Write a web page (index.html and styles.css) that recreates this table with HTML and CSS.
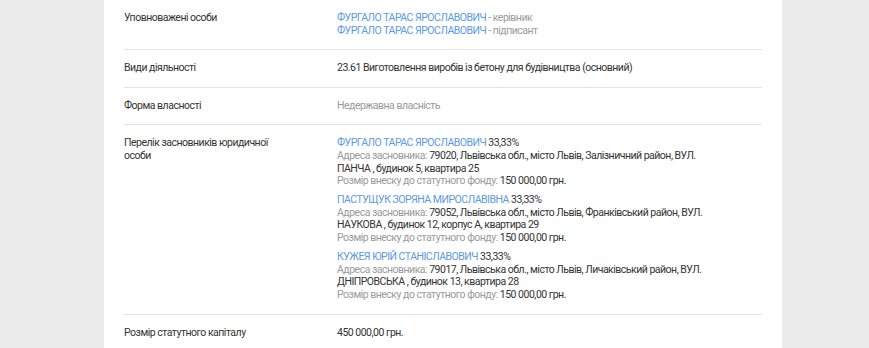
FILE: index.html
```html
<!DOCTYPE html>
<html lang="uk">
<head>
<meta charset="utf-8">
<link rel="stylesheet" href="styles.css">
</head>
<body>
<div class="page">
  <div class="card">
    <div class="row first">
      <div class="label">Уповноважені особи</div>
      <div class="value">
        <div><a class="link">ФУРГАЛО ТАРАС ЯРОСЛАВОВИЧ</a> <span class="muted">- керівник</span></div>
        <div><a class="link">ФУРГАЛО ТАРАС ЯРОСЛАВОВИЧ</a> <span class="muted">- підписант</span></div>
      </div>
    </div>
    <div class="row">
      <div class="label">Види діяльності</div>
      <div class="value">23.61 Виготовлення виробів із бетону для будівництва (основний)</div>
    </div>
    <div class="row">
      <div class="label">Форма власності</div>
      <div class="value muted">Недержавна власність</div>
    </div>
    <div class="row">
      <div class="label">Перелік засновників юридичної<br>особи</div>
      <div class="value founders">
        <div class="founder">
          <div><a class="link">ФУРГАЛО ТАРАС ЯРОСЛАВОВИЧ</a> 33,33%</div>
          <div><span class="muted">Адреса засновника:</span> 79020, Львівська обл., місто Львів, Залізничний район, ВУЛ. ПАНЧА , будинок 5, квартира 25</div>
          <div><span class="muted">Розмір внеску до статутного фонду:</span> 150 000,00 грн.</div>
        </div>
        <div class="founder">
          <div><a class="link">ПАСТУЩУК ЗОРЯНА МИРОСЛАВІВНА</a> 33,33%</div>
          <div><span class="muted">Адреса засновника:</span> 79052, Львівська обл., місто Львів, Франківський район, ВУЛ. НАУКОВА , будинок 12, корпус А, квартира 29</div>
          <div><span class="muted">Розмір внеску до статутного фонду:</span> 150 000,00 грн.</div>
        </div>
        <div class="founder">
          <div><a class="link">КУЖЕЯ ЮРІЙ СТАНІСЛАВОВИЧ</a> 33,33%</div>
          <div><span class="muted">Адреса засновника:</span> 79017, Львівська обл., місто Львів, Личаківський район, ВУЛ. ДНІПРОВСЬКА , будинок 13, квартира 28</div>
          <div><span class="muted">Розмір внеску до статутного фонду:</span> 150 000,00 грн.</div>
        </div>
      </div>
    </div>
    <div class="row">
      <div class="label">Розмір статутного капіталу</div>
      <div class="value">450 000,00 грн.</div>
    </div>
  </div>
  <div class="side"></div>
</div>
</body>
</html>
```
FILE: styles.css
```css
html, body {
  margin: 0;
  padding: 0;
  background: #ececec;
  font-family: Roboto, "Noto Sans", sans-serif;
  font-size: 10.5px;
  letter-spacing: -0.5px;
  line-height: 12.6px;
  color: #333;
  overflow: hidden;
}
.page {
  display: flex;
  padding-left: 104px;
  height: 348px;
}
.card {
  width: 678px;
  background: #fff;
  padding: 0 20px;
  box-sizing: border-box;
}
.row {
  display: flex;
  padding: 12px 0;
  border-bottom: 1px solid #e3e3e3;
}
.label {
  width: 213px;
  flex: none;
  color: #333;
}
.value {
  width: 385px;
  flex: none;
}
.link {
  color: #5b9ae6;
  text-decoration: none;
}
.muted {
  color: #9a9a9a;
}
.founder + .founder {
  margin-top: 6.5px;
}
.side {
  flex: 1;
}
```
